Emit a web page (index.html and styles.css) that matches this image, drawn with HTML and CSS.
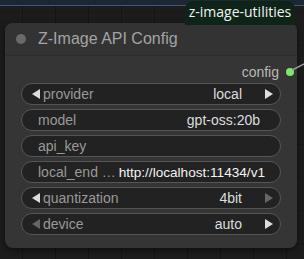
FILE: index.html
```html
<!DOCTYPE html>
<html lang="en">
<head>
    <meta charset="UTF-8">
    <title>Z-Image API Config</title>
    <link rel="stylesheet" href="styles.css">
</head>
<body>
    <div class="top-strip"></div>
    <div class="canvas">
        <!-- Badge del paquete -->
        <div class="pack-tag">z-image-utilities</div>

        <div class="node">
            <div class="node-title">
                <span class="title-dot"></span>
                <span class="title-text">Z-Image API Config</span>
            </div>

            <div class="node-body">
                <div class="output-row">
                    <span class="output-label">config</span>
                    <span class="output-dot"></span>
                </div>

                <div class="widget combo">
                    <span class="arrow left"></span>
                    <span class="w-label">provider</span>
                    <span class="w-value">local</span>
                    <span class="arrow right"></span>
                </div>
                <div class="widget text">
                    <span class="w-label">model</span>
                    <span class="w-value">gpt-oss:20b</span>
                </div>
                <div class="widget text">
                    <span class="w-label">api_key</span>
                    <span class="w-value"></span>
                </div>
                <div class="widget text wide">
                    <span class="w-label short">local_end …</span>
                    <span class="w-value bright">http://localhost:11434/v1</span>
                </div>
                <div class="widget combo">
                    <span class="arrow left"></span>
                    <span class="w-label">quantization</span>
                    <span class="w-value">4bit</span>
                    <span class="arrow right dim"></span>
                </div>
                <div class="widget combo">
                    <span class="arrow left dim"></span>
                    <span class="w-label">device</span>
                    <span class="w-value">auto</span>
                    <span class="arrow right"></span>
                </div>
            </div>
        </div>
    </div>
    <svg class="link" width="20" height="20" viewBox="0 0 20 20">
        <path d="M0 12 L20 2" stroke="#9aa6a0" stroke-width="1.5" fill="none"/>
    </svg>
</body>
</html>
```

FILE: styles.css
```css
* {
    margin: 0;
    padding: 0;
    box-sizing: border-box;
}

html, body {
    width: 304px;
    height: 259px;
    overflow: hidden;
}

body {
    position: relative;
    background-color: #1c1c1c;
    background-image:
        linear-gradient(90deg, #141414 1px, transparent 1px),
        linear-gradient(0deg, #181818 1px, transparent 1px);
    background-size: 33px 33px, 33px 33px;
    background-position: 22px 0, 0 13px;
    font-family: 'Liberation Sans', Arial, sans-serif;
}

.top-strip {
    height: 6px;
    background: #1d2733;
    border-bottom: 1px solid #3c5a78;
}

.canvas {
    position: relative;
    padding: 17px 7px 10px 5px;
}

.pack-tag {
    position: absolute;
    top: -5px;
    left: 185px;
    width: 110px;
    height: 24px;
    background: #0f2419;
    color: #f2f2f2;
    font-family: 'Open Sans', 'Noto Sans', sans-serif;
    font-size: 14px;
    line-height: 22px;
    text-align: center;
    border-radius: 8px 8px 0 0;
    z-index: 2;
}

.node {
    position: relative;
    width: 292px;
    height: 225px;
    background: #353535;
    border-radius: 8px;
    box-shadow: 0 2px 6px rgba(0, 0, 0, 0.5);
}

.node-title {
    display: flex;
    align-items: center;
    height: 33px;
    padding-left: 11px;
    background: #333;
    border-radius: 8px 8px 0 0;
    border-bottom: 1px solid #2c2c2c;
}

.title-dot {
    width: 10px;
    height: 10px;
    border-radius: 50%;
    background: #6a6a6a;
}

.title-text {
    margin-left: 12px;
    font-size: 16px;
    color: #a4a4a4;
}

.node-body {
    display: flex;
    flex-direction: column;
    gap: 4px;
    padding: 0 16px;
}

.output-row {
    display: flex;
    align-items: center;
    justify-content: flex-end;
    height: 23px;
    padding-top: 8px;
    margin-right: -13px;
}

.output-label {
    font-size: 14px;
    color: #b8b8b8;
}

.output-dot {
    width: 8px;
    height: 8px;
    margin-left: 7px;
    border-radius: 50%;
    background: #7ee86a;
}

.widget {
    display: flex;
    align-items: center;
    height: 22px;
    background: #222;
    border: 1px solid #555;
    border-radius: 11px;
    font-size: 14px;
    white-space: nowrap;
    overflow: hidden;
}

.widget.text {
    padding: 0 20px 0 16px;
}

.widget.text.wide {
    padding-right: 15px;
}

.widget.combo {
    padding: 0 7px 0 11px;
}

.w-label {
    color: #999;
    flex: 1;
}

.w-label.short {
    flex: 1;
    overflow: hidden;
}

.w-value {
    color: #ddd;
}

.w-value.bright {
    color: #f4f4f4;
    font-size: 13.6px;
}

.combo .w-value {
    margin-right: 23px;
}

.arrow {
    width: 0;
    height: 0;
    border-top: 5.5px solid transparent;
    border-bottom: 5.5px solid transparent;
}

.arrow.left {
    border-right: 8px solid #ddd;
    margin-right: 3px;
    margin-left: -1px;
}

.arrow.right {
    border-left: 8px solid #ddd;
}

.arrow.left.dim {
    border-right-color: #666;
}

.arrow.right.dim {
    border-left-color: #666;
}

.link {
    position: absolute;
    top: 58px;
    left: 292px;
}
```
